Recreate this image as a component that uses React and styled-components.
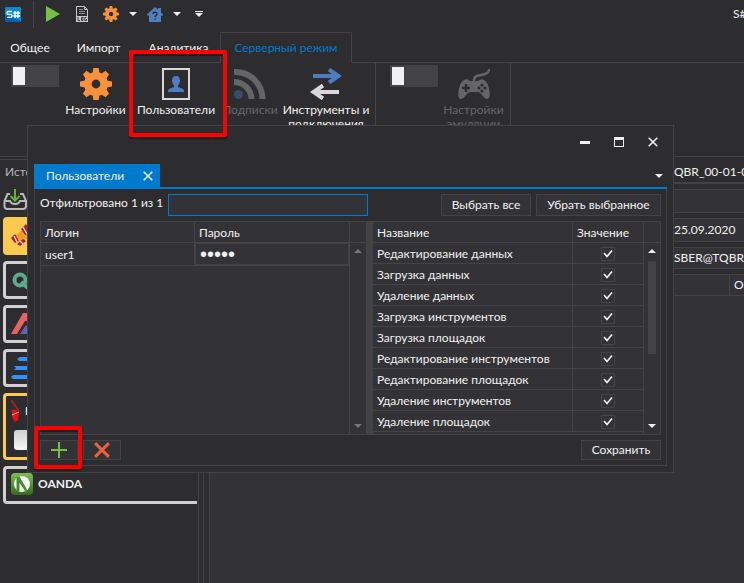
import React, { useState } from "react";
import styled, { createGlobalStyle, css } from "styled-components";

const c = {
  bg: "#2d2d30",
  panel: "#333337",
  line: "#434346",
  blue: "#007acc",
  text: "#f1f1f1",
  dim: "#656568",
  orange: "#f7923a",
  steel: "#4d7cc1",
};

const GlobalStyle = createGlobalStyle`
  *, *::before, *::after { box-sizing: border-box; }
  body {
    margin: 0;
    background: ${c.bg};
    color: ${c.text};
    font: 12px/16px Lato, "Noto Sans", sans-serif;
  }
  button, input { font: inherit; color: inherit; }
  button { background: none; border: 0; padding: 0; margin: 0; }
  svg { display: block; flex: none; }
`;

/* ---------- frame ---------- */
const Window = styled.div`
  position: relative;
  display: flex;
  flex-direction: column;
  min-height: 100vh;
  overflow: hidden;
  white-space: nowrap;
`;

const TitleBar = styled.header`
  display: flex;
  align-items: center;
  height: 28px;
  padding-left: 5px;
`;
const TitleDivider = styled.span`
  width: 1px;
  height: 27px;
  margin: 0 12px;
  background: ${c.line};
`;
const ToolButton = styled.button`
  display: flex;
  align-items: center;
  justify-content: center;
  width: ${(p) => p.$width}px;
  height: 24px;
`;
const WindowTitle = styled.span`
  width: 11px;
  margin-left: auto;
  overflow: hidden;
`;

const Tabs = styled.nav`
  display: flex;
  height: 35px;
  padding-top: 4px;
  border-bottom: 1px solid ${c.line};
`;
const RibbonTab = styled.button`
  height: 31px;
  width: ${(p) => p.$width}px;
  border: 1px solid transparent;
  border-bottom: 0;
  ${(p) =>
    p.$active &&
    css`
      color: ${c.blue};
      border-color: ${c.line};
      background: ${c.bg};
      box-shadow: 0 1px 0 ${c.bg};
    `}
`;

const Ribbon = styled.div`
  display: flex;
  height: 93px;
`;
const RibbonGroup = styled.section`
  display: flex;
  align-items: flex-start;
  padding: 2px ${(p) => p.$end}px 0 ${(p) => p.$start}px;
  border-right: 1px solid ${c.line};
`;
const Switch = styled.button`
  width: 48px;
  height: 22px;
  padding: 2px;
  background: #434345;
  &::before {
    content: "";
    display: block;
    width: 12px;
    height: 18px;
    background: #f1f1f1;
  }
`;
const RibbonItem = styled.button`
  position: relative;
  display: flex;
  flex-direction: column;
  align-items: center;
  gap: 3px;
  width: ${(p) => p.$width}px;
  padding-top: 3px;
  line-height: 14px;
  white-space: normal;
  color: ${(p) => (p.disabled ? c.dim : c.text)};
`;
const Highlight = styled.span`
  position: absolute;
  z-index: 5;
  inset: ${(p) => p.$inset};
  border: 4px solid #fe0000;
  border-radius: 2px;
  box-shadow: 0 2px 1px #1c1c1e, inset 0 2px 1px #1c1c1e;
  pointer-events: none;
`;

/* ---------- workspace ---------- */
const Workspace = styled.div`
  flex: 1;
  display: grid;
  grid-template-columns: 199px 5px 6px 1fr;
  border-top: 1px solid ${c.line};
`;
const Sidebar = styled.aside`
  margin-top: 2px;
  border-top: 1px solid ${c.line};
  border-right: 1px solid ${c.line};
`;
const Gutter = styled.div`
  border-right: 1px solid ${c.line};
`;
const SidebarTitle = styled.h2`
  margin: 0;
  padding: 4px 5px;
  height: 28px;
  font-size: 12px;
  font-weight: 400;
  line-height: 16px;
  color: #b4b4b6;
`;
const SourceList = styled.div`
  display: flex;
  flex-direction: column;
  gap: 6px;
  padding: 1px 1px 0 3px;
`;
const SourceCard = styled.article`
  display: flex;
  flex-wrap: wrap;
  align-items: center;
  align-content: flex-start;
  gap: 5px;
  min-height: 38px;
  padding: 4px 5px;
  border: 3px solid ${(p) => (p.$selected ? "#fbcb50" : "#d0d0d0")};
  border-right: 0;
  border-radius: 4px 0 0 4px;
  background: ${(p) => (p.$filled ? "#fbcb50" : "transparent")};
  font-weight: 700;
`;
const CardButton = styled.button`
  width: 100%;
  height: 20px;
  margin: 3px;
  border-radius: 3px;
  background: linear-gradient(#cfcfcf, #f8f8f8);
`;

const Main = styled.main`
  display: flex;
  flex-direction: column;
  background: ${c.bg};
`;
const FieldRow = styled.div`
  display: grid;
  grid-template-columns: minmax(0, 1fr) ${(p) => p.$tail}px;
  align-items: center;
  height: ${(p) => p.$height}px;
  margin-bottom: 5px;
  border: 1px solid ${c.line};
  border-width: 1px 0;
  background: ${c.panel};
  overflow: hidden;
`;
const DocumentTab = styled(FieldRow)`
  background: none;
  border-width: 0 0 2px;
  padding-top: 5px;
`;
const ColumnHead = styled.span`
  grid-column: 2;
  padding-left: 4px;
  line-height: 20px;
  border-left: 1px solid ${c.line};
`;
const Value = styled.span`
  grid-column: 2;
`;
const Canvas = styled.div`
  flex: 1;
  margin-top: -5px;
  background: ${c.panel};
`;

/* ---------- dialog ---------- */
const Dialog = styled.section`
  position: absolute;
  z-index: 2;
  top: 125px;
  left: 27px;
  right: 70px;
  padding: 0 6px 6px;
  border: 1px solid ${c.line};
  background: ${c.bg};
`;
const DialogBar = styled.div`
  display: flex;
  justify-content: flex-end;
  gap: 6px;
  height: 38px;
`;
const CaptionButton = styled.button`
  display: grid;
  place-items: center;
  width: 28px;
  height: 32px;
`;
const DialogTabs = styled.div`
  display: flex;
  align-items: stretch;
  justify-content: space-between;
  height: 25px;
  border-bottom: 2px solid ${c.blue};
`;
const DialogTab = styled.div`
  display: flex;
  align-items: center;
  justify-content: space-between;
  width: 126px;
  padding: 1px 7px 0 12px;
  background: ${c.blue};
`;
const MenuButton = styled.button`
  padding: 0 4px;
`;
const DialogBody = styled.div`
  padding: 5px;
  border: 1px solid ${c.line};
  border-top: 0;
`;
const FilterBar = styled.div`
  display: flex;
  gap: 5px;
  height: 22px;
`;
const FilterLabel = styled.label`
  line-height: 18px;
`;
const FilterInput = styled.input`
  width: 200px;
  padding: 0 4px;
  border: 1px solid ${c.blue};
  background: ${c.panel};
  outline: 0;
`;
const Spacer = styled.span`
  flex: 1;
`;
const Button = styled.button`
  display: grid;
  place-items: center;
  width: ${(p) => p.$width}px;
  border: 1px solid ${c.line};
  background: ${c.panel};
`;
const Grids = styled.div`
  display: grid;
  grid-template-columns: 325fr 7px 287fr;
  height: 214px;
  margin: 5px 0;
  border: 1px solid ${c.line};
  background: ${c.panel};
`;
const Splitter = styled.div`
  background: ${c.line};
`;
const GridPane = styled.div`
  display: grid;
  grid-template-columns: minmax(0, 1fr) 16px;
  min-width: 0;
  height: 212px;
  overflow: hidden;
`;
const Table = styled.table`
  width: 100%;
  border-collapse: separate;
  border-spacing: 0;
  table-layout: fixed;
`;
const TableBox = styled.div`
  overflow: hidden;
  border-right: 1px solid ${c.line};
`;
const Cell = styled.td`
  height: ${(p) => p.$height || 21}px;
  padding: ${(p) => (p.$flush ? "0" : "2px 4px 0")};
  border-bottom: 1px solid ${c.line};
  border-right: ${(p) => (p.$last ? "0" : `1px solid ${c.line}`)};
  font-weight: 400;
  text-align: left;
  line-height: 16px;
`;
const LastColumn = styled.col`
  width: ${(p) => p.$width};
`;
const PasswordInput = styled.input`
  display: block;
  width: 100%;
  height: 22px;
  padding: 1px 4px 0;
  border: 1px solid ${c.line};
  background: ${c.panel};
  font: 20px/20px "Liberation Sans", sans-serif;
  outline: 0;
`;
const ScrollTrack = styled.div`
  display: flex;
  flex-direction: column;
  align-items: center;
`;
const ScrollHead = styled.div`
  align-self: stretch;
  height: 21px;
  margin-bottom: 6px;
  border-bottom: 1px solid ${c.line};
`;
const Thumb = styled.div`
  width: 8px;
  height: 93px;
  margin-top: 8px;
  background: ${c.line};
`;
const ScrollFoot = styled.div`
  margin-top: auto;
  padding-bottom: 6px;
`;
const CheckWrap = styled.span`
  display: grid;
  place-items: center;
  padding-top: 2px;
  > * {
    grid-area: 1 / 1;
  }
  svg {
    pointer-events: none;
  }
`;
const CheckBox = styled.input`
  appearance: none;
  width: 14px;
  height: 14px;
  margin: 0;
  border: 1px solid ${c.line};
`;
const Footer = styled.div`
  display: flex;
  gap: 5px;
  height: 20px;
`;
const HighlightAnchor = styled.div`
  position: relative;
  display: flex;
`;

/* ---------- icons ---------- */
const Gear = ({ size }) => (
  <svg width={size} height={size} viewBox="-16 -16 32 32" fill={c.orange}>
    <circle r="8.2" fill="none" stroke={c.orange} strokeWidth="7.6" />
    {[0, 45, 90, 135, 180, 225, 270, 315].map((a) => (
      <path key={a} transform={`rotate(${a})`} d="M-3.6-10.5L-2.6-16H2.6L3.6-10.5Z" />
    ))}
  </svg>
);
const Caret = ({ up, color = c.text }) => (
  <svg width="8" height="4" viewBox="0 0 8 4">
    <path d={up ? "M0 4L4 0L8 4Z" : "M0 0L4 4L8 0Z"} fill={color} />
  </svg>
);
const Logo = () => (
  <svg width="16" height="15" viewBox="0 0 16 15">
    <rect width="16" height="15" rx="1" fill="#0a8ad6" />
    <path d="M0 8L16 14V15H0Z" fill="#075fae" />
    <path d="M7 4.5H3Q2 4.5 2 6T3 7.3H6Q7 7.3 7 8.7T6 10.3H2M10 4V11M13 4V11M8.3 6H15M8.3 9H15" fill="none" stroke="#fff" strokeWidth="1.3" />
  </svg>
);
const Play = () => (
  <svg width="14" height="16" viewBox="0 0 14 16">
    <path d="M0 0L14 8L0 16Z" fill="#77c043" />
  </svg>
);
const Log = () => (
  <svg width="12" height="16" viewBox="0 0 12 16">
    <path d="M.5 10V.5H8.500L11.500 3.500V10M8.500 1V3.500H11" fill="none" stroke="#c8c8c8" />
    <path d="M3 3.500H7M3 5.500H9M3 7.500H9" stroke="#8c8c8e" />
    <rect y="10" width="12" height="6" fill="#c8c8c8" />
    <path d="M2 11V14.500H4M5.500 11.500H7V14.500H5.500ZM10.500 11.500H8.800V14.500H10.500V13" fill="none" stroke="#2d2d30" strokeWidth=".9" />
  </svg>
);
const Home = () => (
  <svg width="16" height="15" viewBox="0 0 16 15">
    <path d="M0 7.5L8 0L11 2.8V1H14V5.6L16 7.5V8.5H14V15H2V8.5H0Z" fill="#5080c4" />
    <path d="M6 7Q6 5.3 8 5.3T10 7Q10 8 8.9 8.7Q8 9.2 8 10.3M8 11.5V12.8" fill="none" stroke="#2d2d30" strokeWidth="1.4" />
  </svg>
);
const Customize = () => (
  <svg width="8" height="6" viewBox="0 0 8 6" fill={c.text}>
    <path d="M0 0H8V1H0ZM0 2H8L4 6Z" />
  </svg>
);
const UserCard = () => (
  <svg width="28" height="32" viewBox="0 0 28 32">
    <rect x="1" y="1" width="26" height="30" fill="none" stroke="#d8d8d8" strokeWidth="2" />
    <path d="M14 8C17 8 18 10 18 12.5C18 15 17 16.5 16 17.4V19L21 21Q22 21.6 22 24H6Q6 21.6 7 21L12 19V17.4C11 16.5 10 15 10 12.5C10 10 11 8 14 8Z" fill={c.steel} />
  </svg>
);
const Feed = () => (
  <svg width="32" height="32" viewBox="0 0 32 32" fill="none" stroke="#656568" strokeWidth="6">
    <path d="M0 4A27 27 0 0 1 28.500 31M0 14A17.500 17.500 0 0 1 17.500 31" />
    <circle cx="4.500" cy="26.500" r="4.500" fill="#3c4a68" stroke="none" />
  </svg>
);
const Arrows = () => (
  <svg width="32" height="32" viewBox="0 0 32 32" fill="none" strokeWidth="4">
    <path d="M3 8H29M19 1.500L28.500 8L19 14.500" stroke={c.steel} />
    <path d="M29 24H3M13 17.500L3.500 24L13 30.500" stroke="#d8d8d8" />
  </svg>
);
const Gamepad = () => (
  <svg width="34" height="32" viewBox="0 0 34 32">
    <path d="M17 14V12Q17 9 20 8L28 6Q32 5 32 1" fill="none" stroke="#656568" strokeWidth="2.400" />
    <path d="M7 12Q10 10 13 13H21Q24 10 27 12Q31 14 32.500 23Q33.500 31 30 31Q28 31 25 27Q23 24 21 24H13Q11 24 9 27Q6 31 4 31Q.5 31 1.500 23Q3 14 7 12Z" fill="#656568" />
    <path d="M9 16V24M5 20H13" stroke={c.bg} strokeWidth="2.500" />
    <g fill={c.bg}>
      <circle cx="25" cy="17" r="1.600" /><circle cx="25" cy="23" r="1.600" />
      <circle cx="22" cy="20" r="1.600" /><circle cx="28" cy="20" r="1.600" />
    </g>
  </svg>
);
const Inbox = () => (
  <svg width="24" height="22" viewBox="0 0 24 22" fill="none">
    <path d="M7 5H4.500L1.500 12V17Q1.500 20 4.500 20H20Q23 20 23 17V12L20 5H17M1.500 12H7Q8 15 12 15T17 12H22.500" stroke="#b8b8b8" strokeWidth="2" />
    <path d="M12 0V11M7.500 7L12 11.500L16.500 7" stroke="#66b13b" strokeWidth="2" />
  </svg>
);
const Ribbons = () => (
  <svg width="24" height="24" viewBox="0 0 24 24">
    <path d="M4 12L13 4L19 12L11 19Z" fill="#ee9f25" />
    <path d="M0 14L4 10L8 17L4 19ZM6 20L12 15L15 17L9 22ZM10 5L15 0L20 9L14 11Z" fill="#b91736" />
    <path d="M3 12L6 18M9 17L12 20M12 3L16 10" stroke="#f6e5bc" strokeWidth="1.500" />
  </svg>
);
const Ring = () => (
  <svg width="24" height="24" viewBox="0 0 24 24" fill="none" stroke="#5faa8c">
    <circle cx="9" cy="12" r="5.500" strokeWidth="4" />
    <path d="M10 14L17 20" strokeWidth="4" />
  </svg>
);
const Letterform = () => (
  <svg width="24" height="24" viewBox="0 0 24 24">
    <path d="M0 22L12 1H20L24 9H14L6 22Z" fill="#e86263" />
    <path d="M9 22L15 13L22 22Z" fill="#5b68b1" />
  </svg>
);
const Bars = () => (
  <svg width="24" height="24" viewBox="0 0 24 24" fill="#2b92ff">
    <path d="M9 1H24V5H8L6 3ZM5 10H24V14H3L5 12L3 10ZM2 19H24V23H2L0 21Z" />
  </svg>
);
const Figure = () => (
  <svg width="9" height="22" viewBox="0 0 9 22">
    <path d="M0 0L8 11" stroke="#a52025" strokeWidth="2" />
    <path d="M1 9L5 10L8 13L7 20L4 22L1 17Z" fill="#f00c0c" />
    <path d="M1 15L8 12" stroke="#d8bcbc" />
  </svg>
);
const Oanda = () => (
  <svg width="22" height="22" viewBox="0 0 22 22">
    <defs>
      <linearGradient id="leaf" x2="0" y2="1">
        <stop stopColor="#7dbd54" /><stop offset="1" stopColor="#2f6d1d" />
      </linearGradient>
    </defs>
    <rect width="22" height="22" rx="4" fill="url(#leaf)" />
    <circle cx="11" cy="11" r="8" fill="#f3f6f1" />
    <path d="M7 4V18M7 4L15 18" stroke="#468b2c" strokeWidth="3" fill="none" />
    <path d="M10 12L14 18H10Z" fill="#f3f6f1" />
  </svg>
);
const Cross = ({ size, color = c.text, width = 1.6 }) => (
  <svg width={size} height={size} viewBox="0 0 10 10">
    <path d="M.7.7L9.300 9.300M9.300.7L.7 9.300" stroke={color} strokeWidth={width} />
  </svg>
);
const Plus = () => (
  <svg width="16" height="16" viewBox="0 0 16 16">
    <path d="M8 0V16M0 8H16" stroke="#77c043" strokeWidth="2" />
  </svg>
);
const Minimize = () => (
  <svg width="10" height="10" viewBox="0 0 10 10"><path d="M0 4H10V7H0Z" fill={c.text} /></svg>
);
const Maximize = () => (
  <svg width="10" height="10" viewBox="0 0 10 10"><path d="M0 0H10V10H0ZM1 3V9H9V3Z" fill={c.text} fillRule="evenodd" /></svg>
);
const Tick = () => (
  <svg width="10" height="10" viewBox="0 0 10 10"><path d="M1 4L4 7.500L9 1.500" fill="none" stroke={c.text} strokeWidth="1.700" /></svg>
);

/* ---------- parts ---------- */
const permissions = [
  "Редактирование данных",
  "Загрузка данных",
  "Удаление данных",
  "Загрузка инструментов",
  "Загрузка площадок",
  "Редактирование инструментов",
  "Редактирование площадок",
  "Удаление инструментов",
  "Удаление площадок",
];

function Scroll({ thumb, color }) {
  return (
    <ScrollTrack>
      <ScrollHead />
      <Caret up color={color} />
      {thumb && <Thumb />}
      <ScrollFoot><Caret color={color} /></ScrollFoot>
    </ScrollTrack>
  );
}

function UsersTable() {
  return (
    <GridPane>
      <TableBox>
        <Table>
          <thead>
            <tr><Cell as="th">Логин</Cell><Cell as="th" $last>Пароль</Cell></tr>
          </thead>
          <tbody>
            <tr>
              <Cell $height={23}>user1</Cell>
              <Cell $height={23} $last $flush>
                <PasswordInput type="password" aria-label="Пароль" defaultValue="12345" />
              </Cell>
            </tr>
          </tbody>
        </Table>
      </TableBox>
      <Scroll color="#77777a" />
    </GridPane>
  );
}

function PermissionsTable() {
  const [checked, setChecked] = useState(() => permissions.map(() => true));
  const toggle = (i) => setChecked((all) => all.map((v, n) => (n === i ? !v : v)));
  return (
    <GridPane>
      <TableBox>
        <Table>
          <colgroup><col /><LastColumn $width="70px" /></colgroup>
          <thead>
            <tr><Cell as="th">Название</Cell><Cell as="th" $last>Значение</Cell></tr>
          </thead>
          <tbody>
            {permissions.map((name, i) => (
              <tr key={name}>
                <Cell>{name}</Cell>
                <Cell $last $flush>
                  <CheckWrap>
                    <CheckBox type="checkbox" aria-label={name} checked={checked[i]} onChange={() => toggle(i)} />
                    {checked[i] && <Tick />}
                  </CheckWrap>
                </Cell>
              </tr>
            ))}
          </tbody>
        </Table>
      </TableBox>
      <Scroll thumb />
    </GridPane>
  );
}

function UsersDialog() {
  return (
    <Dialog role="dialog" aria-label="Пользователи">
      <DialogBar>
        <CaptionButton aria-label="Свернуть"><Minimize /></CaptionButton>
        <CaptionButton aria-label="Развернуть"><Maximize /></CaptionButton>
        <CaptionButton aria-label="Закрыть"><Cross size={10} /></CaptionButton>
      </DialogBar>
      <DialogTabs>
        <DialogTab>
          Пользователи
          <button aria-label="Закрыть вкладку"><Cross size={10} /></button>
        </DialogTab>
        <MenuButton aria-label="Список вкладок"><Caret /></MenuButton>
      </DialogTabs>
      <DialogBody>
        <FilterBar>
          <FilterLabel htmlFor="filter">Отфильтровано 1 из 1</FilterLabel>
          <FilterInput id="filter" type="text" />
          <Spacer />
          <Button $width={90}>Выбрать все</Button>
          <Button $width={125}>Убрать выбранное</Button>
        </FilterBar>
        <Grids>
          <UsersTable />
          <Splitter />
          <PermissionsTable />
        </Grids>
        <Footer>
          <HighlightAnchor>
            <Button $width={38} aria-label="Добавить"><Plus /></Button>
            <Highlight $inset="-14px -4px -9px -6px" />
          </HighlightAnchor>
          <Button $width={38} aria-label="Удалить"><Cross size={16} color="#f0603c" width={1.8} /></Button>
          <Spacer />
          <Button $width={80}>Сохранить</Button>
        </Footer>
      </DialogBody>
    </Dialog>
  );
}

export default function App() {
  return (
    <Window>
      <GlobalStyle />
      <TitleBar>
        <Logo />
        <TitleDivider />
        <ToolButton $width={14} aria-label="Старт"><Play /></ToolButton>
        <ToolButton $width={44} aria-label="Журнал"><Log /></ToolButton>
        <ToolButton $width={14} aria-label="Настройки"><Gear size={16} /></ToolButton>
        <ToolButton $width={30} aria-label="Меню настроек"><Caret /></ToolButton>
        <ToolButton $width={14} aria-label="Справка"><Home /></ToolButton>
        <ToolButton $width={30} aria-label="Меню справки"><Caret /></ToolButton>
        <ToolButton $width={14} aria-label="Настроить панель"><Customize /></ToolButton>
        <WindowTitle>S#</WindowTitle>
      </TitleBar>
      <Tabs>
        <RibbonTab $width={60}>Общее</RibbonTab>
        <RibbonTab $width={77}>Импорт</RibbonTab>
        <RibbonTab $width={83}>Аналитика</RibbonTab>
        <RibbonTab $width={132} $active>Серверный режим</RibbonTab>
      </Tabs>
      <Ribbon>
        <RibbonGroup $start={11} $end={3}>
          <Switch role="switch" aria-checked="false" aria-label="Серверный режим" />
          <RibbonItem $width={73}><Gear size={32} />Настройки</RibbonItem>
          <RibbonItem $width={88}>
            <UserCard />Пользователи
            <Highlight $inset="-15px -7px -20px -3px" />
          </RibbonItem>
          <RibbonItem $width={60} disabled><Feed />Подписки</RibbonItem>
          <RibbonItem $width={92}><Arrows />Инструменты и подключения</RibbonItem>
        </RibbonGroup>
        <RibbonGroup $start={14} $end={1}>
          <Switch role="switch" aria-checked="false" aria-label="Эмуляция" />
          <RibbonItem $width={71} disabled><Gamepad />Настройки эмуляции</RibbonItem>
        </RibbonGroup>
      </Ribbon>
      <Workspace>
        <Sidebar>
          <SidebarTitle>Источники</SidebarTitle>
          <SourceList>
            <Inbox />
            <SourceCard $selected $filled><Ribbons /></SourceCard>
            <SourceCard><Ring /></SourceCard>
            <SourceCard><Letterform /></SourceCard>
            <SourceCard><Bars /></SourceCard>
            <SourceCard $selected><Figure />I<CardButton aria-label="Подключить" /></SourceCard>
            <SourceCard><Oanda />OANDA</SourceCard>
          </SourceList>
        </Sidebar>
        <Gutter />
        <Gutter />
        <Main>
          <DocumentTab $height={27} $tail={70}><Value>QBR_00-01-00</Value></DocumentTab>
          <FieldRow $height={24} $tail={70} />
          <FieldRow $height={24} $tail={70}><Value>25.09.2020</Value></FieldRow>
          <FieldRow $height={22} $tail={70}><Value>SBER@TQBR</Value></FieldRow>
          <FieldRow $height={22} $tail={15}><ColumnHead>Объем</ColumnHead></FieldRow>
          <Canvas />
        </Main>
      </Workspace>
      <UsersDialog />
    </Window>
  );
}
